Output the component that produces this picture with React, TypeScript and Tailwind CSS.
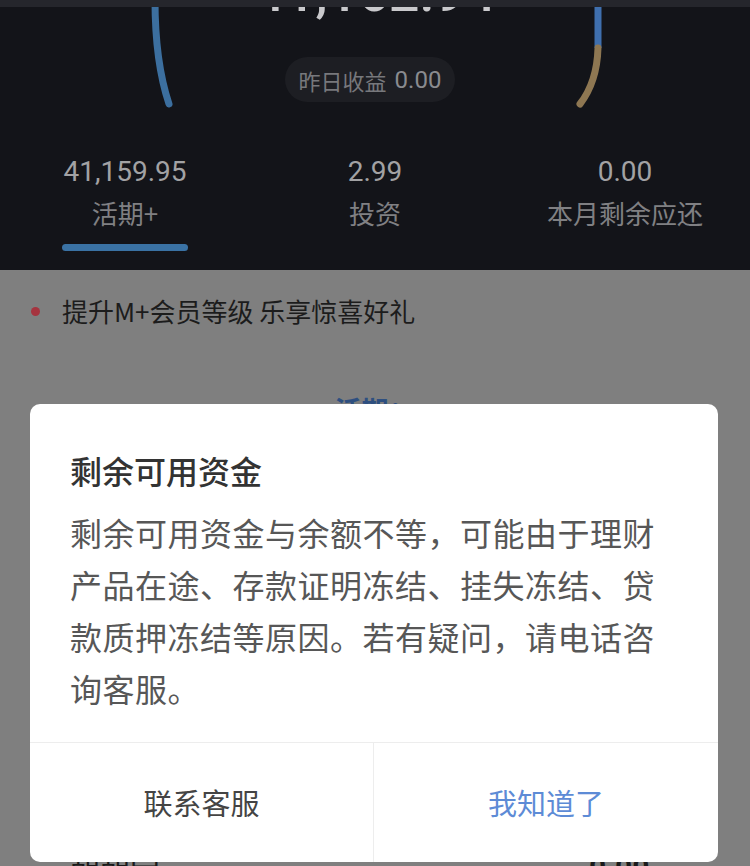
import React from "react";

const cjk = { fontFamily: '"Noto Sans CJK SC", "Noto Sans", sans-serif' };
const num = { fontFamily: 'Roboto, "Noto Sans CJK SC", sans-serif' };

function Gauge() {
  return (
    <svg
      className="absolute left-0 top-0"
      width="750"
      height="112"
      viewBox="0 0 750 112"
      fill="none"
    >
      <path d="M155 0 Q155 62 169 104" stroke="#3c6f9f" strokeWidth="7" strokeLinecap="round" />
      <path d="M598 0 L598 48" stroke="#3f6fae" strokeWidth="7" strokeLinecap="butt" />
      <path d="M598 48 Q597 82 580 104" stroke="#8e7752" strokeWidth="7" strokeLinecap="round" />
    </svg>
  );
}

function Stat({ value, label, active }: { value: string; label: string; active?: boolean }) {
  return (
    <div className="flex flex-col items-center">
      <div className="text-[28px] leading-[36px] text-[#a2a2a4]" style={num}>
        {value}
      </div>
      <div className="mt-[7px] text-[26px] leading-[32px] text-[#808083]" style={cjk}>
        {label}
      </div>
      <div
        className={
          active
            ? "mt-[15px] h-[7px] w-[126px] rounded-full bg-[#3a72a4]"
            : "mt-[15px] h-[7px] w-[126px] rounded-full bg-transparent"
        }
      />
    </div>
  );
}

export default function App() {
  return (
    <div className="relative h-[866px] w-[750px] overflow-hidden bg-[#7f7f7f]" style={cjk}>
      {/* dark header */}
      <div className="relative h-[270px] bg-[#131419]">
        <Gauge />
        <div className="relative flex h-[20px] items-end justify-center overflow-hidden">
          <div className="text-[54px] font-medium leading-none text-[#c9c9cc]" style={num}>
            41,162.94
          </div>
        </div>
        {/* sticky top bar edge covering the scrolled number */}
        <div className="absolute left-0 right-0 top-0 h-[7px] bg-[#25262c]" />
        <div className="relative mt-[37px] flex justify-center pr-[10px]">
          <div className="flex h-[45px] w-[170px] items-center justify-center gap-[8px] rounded-full bg-[#1d1e23]">
            <span className="text-[22px] leading-none text-[#77787c]" style={cjk}>
              昨日收益
            </span>
            <span className="text-[24px] leading-none text-[#8a8b8f]" style={num}>
              0.00
            </span>
          </div>
        </div>
        <div className="relative mt-[52px] grid grid-cols-3">
          <Stat value="41,159.95" label="活期+" active />
          <Stat value="2.99" label="投资" />
          <Stat value="0.00" label="本月剩余应还" />
        </div>
      </div>

      {/* dimmed page body */}
      <div className="flex flex-col">
        <div className="flex h-[82px] items-center pl-[31px]">
          <div className="h-[9px] w-[9px] rounded-full bg-[#a5343f]" />
          <div className="ml-[22px] text-[26px] leading-[34px] text-[#1c1c1c]">
            提升M+会员等级 乐享惊喜好礼
          </div>
        </div>
        <div className="mt-[40px] flex justify-center">
          <div className="text-[27px] font-bold leading-[36px] text-[#2e4f80]">活期：</div>
        </div>
        <div className="mt-[420px] flex items-start justify-between pl-[70px] pr-[64px]">
          <div className="text-[30px] leading-[40px] text-[#1a1a1a]">朝朝宝</div>
          <div className="flex items-center gap-[30px]">
            <div className="text-[30px] font-bold leading-[40px] text-[#1a1a1a]" style={num}>
              0.00
            </div>
            <div className="text-[22px] leading-[40px] text-[#555]">›</div>
          </div>
        </div>
      </div>

      {/* modal */}
      <div className="absolute left-[30px] top-[404px] flex h-[458px] w-[688px] flex-col overflow-hidden rounded-[10px] bg-white">
        <div className="flex flex-1 flex-col pl-[40px] pr-[40px] pt-[44px]">
          <div className="text-[32px] font-medium leading-[44px] text-[#333333]">剩余可用资金</div>
          <div className="mt-[14px] w-[596px] text-[32px] leading-[52px] tracking-[0.5px] text-[#575757]">
            剩余可用资金与余额不等，可能由于理财产品在途、存款证明冻结、挂失冻结、贷款质押冻结等原因。若有疑问，请电话咨询客服。
          </div>
        </div>
        <div className="grid h-[120px] grid-cols-2 border-t border-[#ededed]">
          <div className="flex items-center justify-center border-r border-[#ededed]">
            <span className="text-[29px] leading-none text-[#444444]">联系客服</span>
          </div>
          <div className="flex items-center justify-center">
            <span className="text-[29px] leading-none text-[#5d8bd6]">我知道了</span>
          </div>
        </div>
      </div>
    </div>
  );
}
